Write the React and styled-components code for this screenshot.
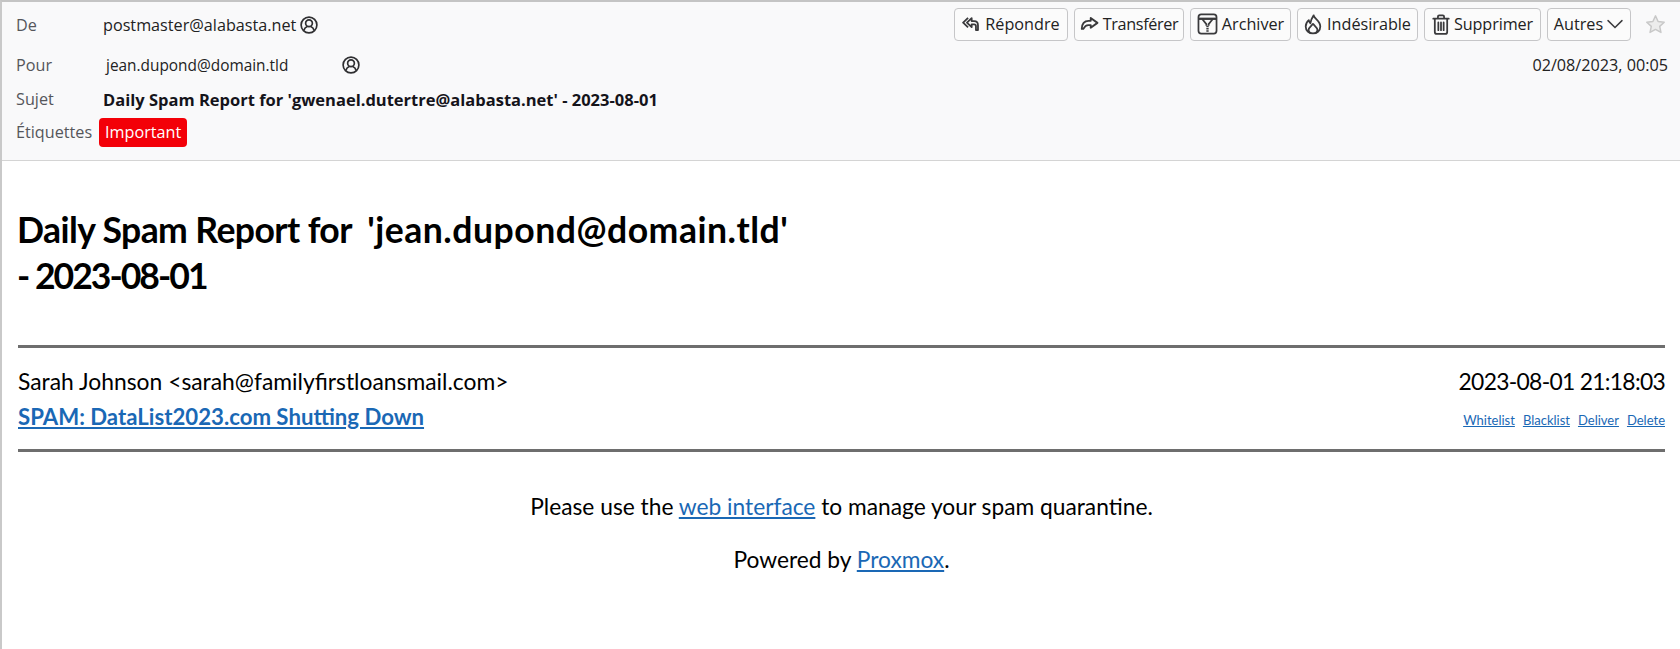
import React from 'react'
import styled, { createGlobalStyle } from 'styled-components'

const Global = createGlobalStyle`
  html, body {
    margin: 0;
    background: #fff;
  }
`

const Page = styled.div`
  height: 649px;
  box-sizing: border-box;
  overflow: hidden;
  border-top: 2px solid #c4c4c4;
  border-left: 2px solid #c9c9c9;
  background: #fff;
  color: #000;
`

const Header = styled.div`
  height: 159px;
  box-sizing: border-box;
  background: #f9f9fa;
  border-bottom: 1px solid #d4d4d4;
  padding: 5px 12px 0 14px;
  font-family: 'Open Sans', 'Noto Sans', sans-serif;
  font-size: 16.2px;
  color: #222;
`

const Row = styled.div`
  display: flex;
  align-items: center;
  height: ${p => p.$h}px;
`

const Label = styled.div`
  width: 87px;
  flex: none;
  color: #55565a;
`

const ToValue = styled.span`
  margin-left: 3px;
  width: 232px;
  font-size: 15.4px;
`

const Subject = styled.div`
  font-weight: 700;
  font-size: 16.5px;
  color: #15141a;
`

const Tag = styled.span`
  margin: 1px 0 0 -4px;
  background: #f30008;
  color: #fff;
  border-radius: 4px;
  padding: 4px 6px;
  line-height: 21px;
`

const PersonIcon = styled.svg`
  width: 18px;
  height: 18px;
  margin-left: 4px;
  flex: none;
`

const Actions = styled.div`
  margin: -2px 0 0 auto;
  display: flex;
  align-items: center;
  gap: 6px;
`

const ActionButton = styled.div`
  display: flex;
  align-items: center;
  justify-content: center;
  gap: ${p => p.$gap || 5}px;
  width: ${p => p.$w}px;
  height: 33px;
  box-sizing: border-box;
  border: 1px solid #c6c6c8;
  border-radius: 4px;
  background: #fbfbfb;
  white-space: nowrap;
  letter-spacing: ${p => p.$tight || 0}px;
`

const Star = styled.svg`
  width: 21px;
  height: 21px;
  margin-left: 8px;
  margin-right: 2px;
`

const Date = styled.div`
  margin-left: auto;
`

const Body = styled.div`
  padding: 46px 15px 0 16px;
  font-family: Lato, 'Open Sans', sans-serif;
  font-size: 22.85px;
`

const Title = styled.h1`
  margin: 0 0 0 -1px;
  font-size: 35.6px;
  line-height: 46px;
  font-weight: 700;
  white-space: pre-wrap;
`

const TitleLead = styled.span`
  letter-spacing: -0.6px;
`

const TitleAddress = styled.span`
  letter-spacing: 0.5px;
`

const TitleDate = styled.span`
  letter-spacing: -2px;
`

const Timestamp = styled.span`
  letter-spacing: -0.7px;
`

const Rule = styled.hr`
  margin: ${p => p.$top}px 0 0;
  height: 3px;
  border: 0;
  background: #6e6e6e;
`

const EntryRow = styled.div`
  display: flex;
  justify-content: space-between;
  align-items: baseline;
  margin-top: ${p => p.$top}px;
`

const MessageLink = styled.a`
  color: #1a68b5;
  font-weight: 700;
  font-size: 22.2px;
  text-decoration: underline;
`

const SmallLinks = styled.div`
  display: flex;
  gap: 8px;
  font-size: 13px;
`

const BodyLink = styled.a`
  color: #1a68b5;
  text-decoration: underline;
`

const Note = styled.p`
  margin: ${p => p.$top}px 0 0;
  text-align: center;
  font-size: 22.75px;
`

const Person = () => (
  <PersonIcon viewBox="0 0 16 16" fill="none" stroke="#2f2f31" strokeWidth="1.5">
    <circle cx="8" cy="8" r="7" />
    <circle cx="8" cy="6.4" r="3" />
    <path d="M3.4 12.8c.6-2 2-3 3-3.4M12.6 12.8c-.6-2-2-3-3-3.4" />
  </PersonIcon>
)

const ReplyIcon = () => (
  <svg width="18" height="18" viewBox="0 0 16 16" fill="none" stroke="#3a3a3c" strokeWidth="1.6" strokeLinejoin="round">
    <path d="M5.4 2.6 1 6.8l4.4 4.2" />
    <path d="M8.6 2.8 4.4 6.8l4.2 4V8.4h2.2c1 0 1.6.6 1.6 1.6v3.4h1.8V9c0-2.2-1.4-3.6-3.4-3.6H8.6z" />
  </svg>
)

const ForwardIcon = () => (
  <svg width="19" height="18" viewBox="0 0 17 16" fill="none" stroke="#3a3a3c" strokeWidth="1.7" strokeLinejoin="round">
    <path d="M9.6 2.6 15.6 7l-6 4.4V9H7.4c-1.8 0-3 .8-4.4 3.4H1.6c0-4.6 2.4-7.2 6-7.2h2z" />
  </svg>
)

const ArchiveIcon = () => (
  <svg width="21" height="22" viewBox="0 0 18 19" fill="none" stroke="#3a3a3c" strokeWidth="1.5">
    <rect x="1.2" y="1.2" width="15.6" height="16.6" rx="2.4" />
    <path d="M1.2 5h15.6" strokeWidth="2" />
    <path d="M4.6 5.4 8 9.6V11M13.4 5.4 10 9.6V11" />
    <path d="M8 11.6h2M8 13.6h2M8 15.6h2" strokeWidth="1.2" />
  </svg>
)

const JunkIcon = () => (
  <svg width="18" height="21" viewBox="0 0 16 19" fill="none" stroke="#3a3a3c" strokeWidth="1.6" strokeLinejoin="round">
    <path d="M8.6 1.2c.2 2.8 6 5 6 10 0 3.8-2.8 6.4-6.6 6.4s-6.6-2.6-6.6-6.4c0-2.4 1.2-4.2 2.8-5.6.2 1.4.6 2.2 1.4 2.8.4-2.6 1.6-5 3-7.2z" />
    <path d="M5.2 16.8c-.8-.7-1.2-1.6-1.2-2.6 0-1.8 2-3 4-5.2 2 2.2 4 3.4 4 5.2 0 1-.4 1.9-1.2 2.6" />
  </svg>
)

const TrashIcon = () => (
  <svg width="18" height="21" viewBox="0 0 16 19" fill="none" stroke="#3a3a3c" strokeWidth="1.6" strokeLinecap="round">
    <path d="M1 4.2h14M5.2 3.8V2.4c0-.7.5-1.2 1.2-1.2h3.2c.7 0 1.2.5 1.2 1.2v1.4" />
    <path d="M2.4 4.4v11.8c0 1 .8 1.8 1.8 1.8h7.6c1 0 1.8-.8 1.8-1.8V4.4" />
    <path d="M5.6 7.6v7M8 7.6v7M10.4 7.6v7" />
  </svg>
)

const Chevron = () => (
  <svg width="18" height="18" viewBox="0 0 16 16" fill="none" stroke="#3a3a3c" strokeWidth="1.3" strokeLinecap="round" strokeLinejoin="round">
    <path d="M1.8 5 8 11.2 14.2 5" />
  </svg>
)

const actions = [
  { label: 'Répondre', icon: <ReplyIcon />, w: 114 },
  { label: 'Transférer', icon: <ForwardIcon />, w: 110, gap: 4, tight: -0.35 },
  { label: 'Archiver', icon: <ArchiveIcon />, w: 101, gap: 4 },
  { label: 'Indésirable', icon: <JunkIcon />, w: 121 },
  { label: 'Supprimer', icon: <TrashIcon />, w: 117, gap: 4, tight: -0.1 },
]

const App = () => (
  <Page>
    <Global />
    <Header>
      <Row $h={36}>
        <Label>De</Label>
        <span>postmaster@alabasta.net</span>
        <Person />
        <Actions>
          {actions.map(a => (
            <ActionButton key={a.label} $w={a.w} $gap={a.gap} $tight={a.tight}>
              {a.icon}
              {a.label}
            </ActionButton>
          ))}
          <ActionButton $w={84} $gap={3}>
            Autres
            <Chevron />
          </ActionButton>
          <Star viewBox="0 0 20 20" fill="#ececec" stroke="#c8c8c8" strokeWidth="1.4" strokeLinejoin="round">
            <path d="M10 1.8l2.5 5.3 5.8.7-4.3 4 1.2 5.8-5.2-2.9-5.2 2.9 1.2-5.8-4.3-4 5.8-.7z" />
          </Star>
        </Actions>
      </Row>
      <Row $h={44}>
        <Label>Pour</Label>
        <ToValue>jean.dupond@domain.tld</ToValue>
        <Person />
        <Date>02/08/2023, 00:05</Date>
      </Row>
      <Row $h={24}>
        <Label>Sujet</Label>
        <Subject>Daily Spam Report for 'gwenael.dutertre@alabasta.net' - 2023-08-01</Subject>
      </Row>
      <Row $h={41}>
        <Label>Étiquettes</Label>
        <Tag>Important</Tag>
      </Row>
    </Header>
    <Body>
      <Title>
        <TitleLead>Daily Spam Report for  </TitleLead>
        <TitleAddress>'jean.dupond@domain.tld'</TitleAddress>
        {'\n'}
        <TitleDate>- 2023-08-01</TitleDate>
      </Title>
      <Rule $top={46} />
      <EntryRow $top={19}>
        <span>Sarah Johnson &lt;sarah@familyfirstloansmail.com&gt;</span>
        <Timestamp>2023-08-01 21:18:03</Timestamp>
      </EntryRow>
      <EntryRow $top={8}>
        <MessageLink href="#">SPAM: DataList2023.com Shutting Down</MessageLink>
        <SmallLinks>
          <BodyLink href="#">Whitelist</BodyLink>
          <BodyLink href="#">Blacklist</BodyLink>
          <BodyLink href="#">Deliver</BodyLink>
          <BodyLink href="#">Delete</BodyLink>
        </SmallLinks>
      </EntryRow>
      <Rule $top={19} />
      <Note $top={41}>
        Please use the <BodyLink href="#">web interface</BodyLink> to manage your spam quarantine.
      </Note>
      <Note $top={26}>
        Powered by <BodyLink href="#">Proxmox</BodyLink>.
      </Note>
    </Body>
  </Page>
)

export default App
